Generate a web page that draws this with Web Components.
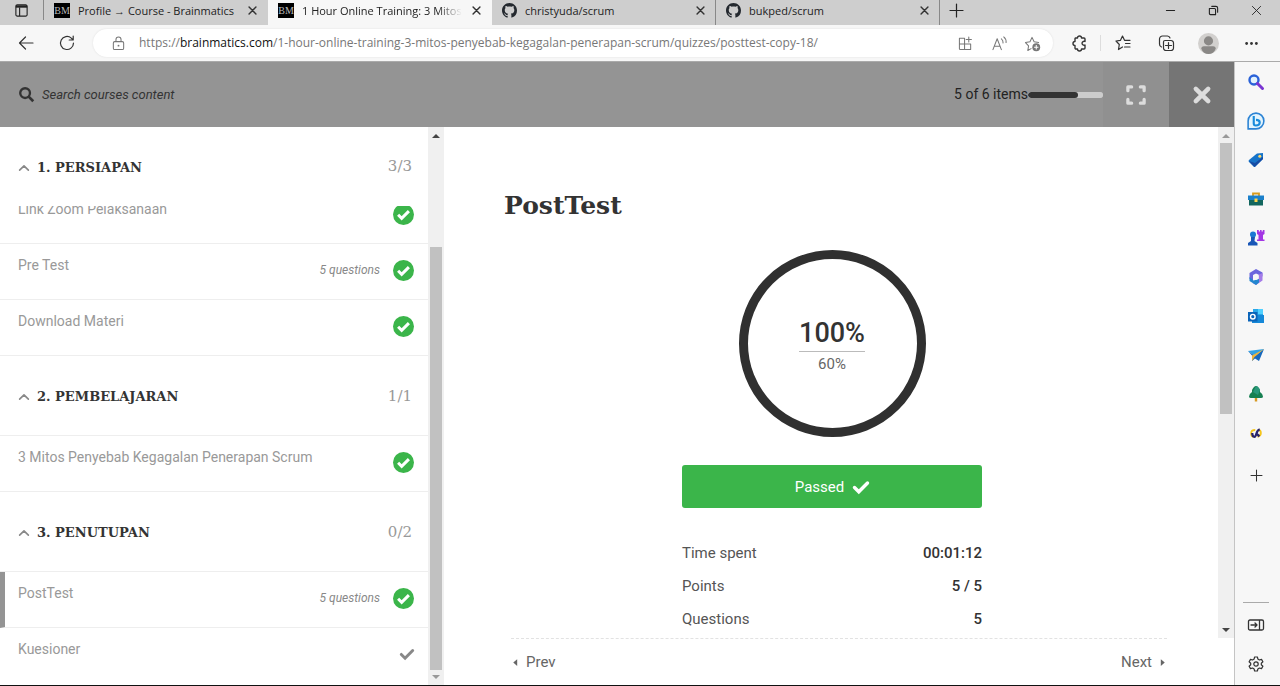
<!DOCTYPE html>
<html lang="id">
<head>
<meta charset="utf-8">
<title>1 Hour Online Training: 3 Mitos Penyebab Kegagalan Penerapan Scrum</title>
<style>
html,body{margin:0;height:100%}
body{font-family:Roboto,"Liberation Sans",sans-serif;color:#333;background:#fff}
</style>
</head>
<body>
<browser-window></browser-window>
<script>
const base = '*{box-sizing:border-box}button{font:inherit;color:inherit;background:none;border:0;padding:0;margin:0;display:flex;align-items:center;justify-content:center}a{color:inherit;text-decoration:none}';
const define = (name, css, html, setup) => {
  const t = document.createElement('template');
  t.innerHTML = `<style>${base}${css}</style>${html}`;
  customElements.define(name, class extends HTMLElement {
    constructor() {
      super();
      this.attachShadow({mode: 'open'}).append(t.content.cloneNode(true));
    }
    connectedCallback() { if (setup) setup(this, this.shadowRoot); }
  });
};

const ln = (d, w = 1.2) => `<path d="${d}" fill="none" stroke="currentColor" stroke-width="${w}" stroke-linecap="round" stroke-linejoin="round"/>`;
const github = '<path fill="#24292f" d="M8 0C3.58 0 0 3.58 0 8c0 3.54 2.29 6.53 5.47 7.59.4.07.55-.17.55-.38 0-.19-.01-.82-.01-1.49-2.01.37-2.53-.49-2.69-.94-.09-.23-.48-.94-.82-1.13-.28-.15-.68-.52-.01-.53.63-.01 1.08.58 1.23.82.72 1.21 1.87.87 2.33.66.07-.52.28-.87.51-1.07-1.78-.2-3.64-.89-3.64-3.95 0-.87.31-1.59.82-2.15-.08-.2-.36-1.02.08-2.12 0 0 .67-.21 2.2.82.64-.18 1.32-.27 2-.27s1.36.09 2 .27c1.53-1.04 2.2-.82 2.2-.82.44 1.1.16 1.92.08 2.12.51.56.82 1.27.82 2.15 0 3.07-1.87 3.75-3.65 3.95.29.25.54.73.54 1.48 0 1.07-.01 1.93-.01 2.2 0 .21.15.46.55.38A8.01 8.01 0 0 0 16 8c0-4.42-3.58-8-8-8z"/>';
const icons = {
  github,
  tabs: ln('M3.5 2h9a1.5 1.5 0 0 1 1.5 1.5v9a1.5 1.5 0 0 1-1.5 1.5h-9A1.5 1.5 0 0 1 2 12.500v-9A1.500 1.500 0 0 1 3.500 2zM6 5v9') + '<path fill="currentColor" d="M2 2.500h12V5H2z"/>',
  x: ln('M3 3l10 10M13 3L3 13', 2.1),
  xthin: ln('M2 2l12 12M14 2L2 14', 1.3),
  plus: ln('M8 0v16M0 8h16', 1.5),
  min: ln('M2 8h12', 1.5),
  restore: ln('M2 5h7.500a1.500 1.500 0 0 1 1.500 1.500V14H3.500A1.500 1.500 0 0 1 2 12.500zM5.500 2h6A2.500 2.500 0 0 1 14 4.500v6', 1.6),
  back: ln('M15 8H1.500M7.500 2L1.500 8l6 6'),
  reload: ln('M14.500 8a6.500 6.500 0 1 1-2.200-4.900L14 4.800M14.200 1v4h-4'),
  lock: ln('M4 6h8a1.500 1.500 0 0 1 1.500 1.500V13A1.500 1.500 0 0 1 12 14.500H4A1.500 1.500 0 0 1 2.500 13V7.500A1.500 1.500 0 0 1 4 6zM5.300 6V3.800a2.700 2.700 0 0 1 5.400 0V6', 1.1) + '<circle cx="8" cy="10.300" r="1" fill="currentColor"/>',
  apps: ln('M1.500 2.500H7v12M1.500 2.500v11a1 1 0 0 0 1 1H13.500V8.500H1.500M11.500 1v5.500M8.700 3.700h5.600', 1.1),
  read: ln('M1 14.500L5.500 3 10 14.500M2.500 11h6M10 3q2 1.500 1.800 4.500M12.500 1q3 2.500 2.500 6', 1.1),
  favadd: ln('M6.500 13.500L3 15.500l.8-5L0.500 7l4.800-.8L7.500 1.500l2.200 4.700 4.800.8', 1.1) + '<circle cx="12" cy="12" r="4.200" fill="currentColor"/><path d="M12 9.700v4.600M9.700 12h4.600" stroke="#fff" stroke-width="1.100"/>',
  puzzle: ln('M4.500 3h2a2 2 0 0 1 4 0H13a1 1 0 0 1 1 1v2.500a2 2 0 1 0 0 3.500v3a1 1 0 0 1-1 1h-2.500a2 2 0 0 1-4 0H5a1 1 0 0 1-1-1v-2.500a2 2 0 1 1 0-4V4q0-1 .5-1z', 1.400),
  fav: ln('M7.500 12l-4 2.500.8-5L1 6l4.500-.7L7.500 1l2 4.300H15M10.500 8.500H15M9.500 12H15'),
  collect: ln('M7 5.500h6A2.500 2.500 0 0 1 15.500 8v5A2.500 2.500 0 0 1 13 15.500H8A2.500 2.500 0 0 1 5.500 13V7A1.500 1.500 0 0 1 7 5.500zM10.500 7.500v6M7.500 10.500h6M3.500 12A3 3 0 0 1 1.500 9V4a3 3 0 0 1 3-3h5A3 3 0 0 1 12 3'),
  user: '<circle cx="8" cy="8" r="8" fill="#d2d0ce"/><circle cx="8" cy="6" r="3.500" fill="#8a8886"/><path fill="#8a8886" d="M2.500 12q0-2 2-2h7q2 0 2 2Q12 16 8 16t-5.500-4z"/>',
  dots: '<g fill="currentColor"><circle cx="2" cy="8" r="1.700"/><circle cx="8" cy="8" r="1.700"/><circle cx="14" cy="8" r="1.700"/></g>',
  search: '<circle cx="6.500" cy="6.500" r="5.200" fill="none" stroke="currentColor" stroke-width="2.500"/><path d="M10.300 10.300l4.900 4.900" stroke="currentColor" stroke-width="2.900"/>',
  full: ln('M1.500 4.500v-3h3M11.500 1.500h3v3M14.500 11.500v3h-3M4.500 14.500h-3v-3', 2.600),
  close: ln('M2.500 2.500l11 11M13.500 2.500l-11 11', 4),
  up: ln('M1 11.500L8 4.500l7 7', 2.600),
  check: '<path d="M1.500 8.500l4.300 4.300L14.500 4" fill="none" stroke="currentColor" stroke-width="3.400" stroke-linecap="round"/>',
  done: '<circle cx="8" cy="8" r="8" fill="#3bb54a"/><path d="M3.900 8.200l2.700 2.700L12.100 5.400" fill="none" stroke="#fff" stroke-width="2.300"/>',
  left: '<path fill="currentColor" d="M11 2v12L4 8z"/>',
  right: '<path fill="currentColor" d="M5 2v12l7-6z"/>',
  sSearch: '<circle cx="6" cy="6" r="4.500" fill="#e2f2fc" stroke="#2a62d8" stroke-width="2.400"/><path d="M9.500 9.500l5 5" stroke="#7a35d2" stroke-width="3" stroke-linecap="round"/>',
  sBing: '<path d="M1 15V8a7 7 0 1 1 7 7z" fill="#e3f4fd" stroke="#2b83d4" stroke-width="1.400"/><path d="M6 3.500v6.800q0 1.700 1.800 1.700c2 0 3.500-1 3.500-2.600S9.500 7 8 7" fill="none" stroke="#188bdc" stroke-width="1.900"/>',
  sTag: '<path d="M9 1.500l6-.5v6l-7.500 7.500q-1 1-2 0l-4.500-4.500q-1-1 0-2z" fill="#1673c9"/><path d="M1 9l5.500 6L15 7v-2L7 11z" fill="#174ba3"/><circle cx="11.800" cy="4.300" r="1.500" fill="#ffd86a"/>',
  sTool: '<path d="M5 5V2.500h6V5" fill="none" stroke="#d99b1c" stroke-width="1.800"/><path d="M0 4.500h16V9H0z" fill="#1b80cb"/><path d="M1 9h14v5.500H1z" fill="#12665e"/><path d="M6.500 7.500h3V11h-3z" fill="#ffd44d"/>',
  sGame: '<circle cx="5" cy="4.500" r="3" fill="#1b78d4"/><path d="M3 7h4l-.5 4 3 2v2.500H0V13l3-2z" fill="#1956b6"/><path d="M9 0h1.800v1.500h1.200V0h1.600v1.500h1.200V0H16.500v4l-1.500 1v4.500h1.500V11H9V9.500h1.500V5L9 4z" fill="#a336e4"/>',
  sOffice: '<path d="M8 0l6.500 3.500v4L8 4.500 5 6v6l-3.500-2V4z" fill="#6b65dd"/><path d="M14.500 4v7.500L8 16l-3.500-2 6-3.500V5.700z" fill="#a47be8"/><path d="M1.500 8v4L8 16l3-2.500V10L5.500 11.500z" fill="#2386cf"/><path d="M8 5l2.700 1.500v3L8 11 5.300 9.500v-3z" fill="#f7f7f7"/>',
  sOutlook: '<path d="M5 1h10v6H5z" fill="#28a8ea"/><path d="M10 1h5v5h-5z" fill="#50d0ff"/><path d="M4 7h12v8H4z" fill="#1588d8"/><path d="M0 4h9.500v9.500H0z" fill="#0a64b9"/><circle cx="4.800" cy="8.700" r="2.300" fill="none" stroke="#fff" stroke-width="1.400"/>',
  sSend: '<path d="M0 4l16-2-9 7z" fill="#30a2e4"/><path d="M0 4l7 5 9-7-5 12-4-2.500L4 14V8.500z" fill="#1768bd"/><path d="M4 8.500L16 2 6.500 10 4 14z" fill="#efb43b"/>',
  sTree: '<path d="M6.800 11h2.400v4.500H6.800z" fill="#d79a24"/><path d="M8 0q2 0 4 4v2q3 2 3 4.500Q15 12 13 12H3q-2 0-2-1.500Q1 8 4 6V4q2-4 4-4z" fill="#178052"/><path d="M8 0q2 0 4 4l-2 5-5-3z" fill="#29977a"/>',
  sLoop: '<path d="M7 4Q1.500 4 1.500 8.500 1.500 13 5 13" fill="none" stroke="#f5c51b" stroke-width="2.400"/><path d="M11 4q3.500 0 3.500 4T10 13" fill="none" stroke="#f5c51b" stroke-width="2.400"/><path d="M3 8q0 5 3 5C9 13 8 3.500 13 3.500M9 9l3.500 3.500" fill="none" stroke="#28236c" stroke-width="3"/>',
  panel: ln('M2 3h12q1.500 0 1.500 1.500v7Q15.500 13 14 13H2Q.5 13 .5 11.500v-7Q.5 3 2 3zM11.500 3v10M3 8h6M7 6l2 2-2 2', 1.3),
  gear: ln('M6.600 1h2.800l.5 2.100 1.500.9 2.100-.6 1.400 2.400L13.300 7.300v1.400l1.600 1.500-1.400 2.400-2.100-.6-1.500.9-.5 2.100H6.600l-.5-2.100-1.500-.9-2.100.6-1.400-2.400 1.600-1.500V7.300L1.100 5.800l1.400-2.400 2.100.6 1.500-.9z') + '<circle cx="8" cy="8" r="2.200" fill="none" stroke="currentColor" stroke-width="1.200"/>'
};

define('ui-icon', ':host{display:block;flex:none;width:var(--s,16px);height:var(--s,16px)}svg{display:block;width:100%;height:100%;overflow:visible}', '<svg viewBox="0 0 16 16" aria-hidden="true"></svg>',
  (el, r) => { r.querySelector('svg').innerHTML = icons[el.getAttribute('name')] || ''; });

define('brand-mark', ':host{display:flex;flex:none;width:16px;height:15px;background:#000;color:#bbb;align-items:center;justify-content:center;font:10px/15px "Liberation Serif",serif}', '<span>BM</span>');

define('browser-tab', `
:host{display:flex;flex:0 1 224px;min-width:0;height:25px;align-items:center;gap:8px;padding:0 9px 4px 10px;border-right:1px solid var(--edge,transparent)}
:host([active]){background:#f7f7f7}
.t{flex:1;min-width:0;white-space:nowrap;overflow:hidden;font-size:11px;line-height:20px;color:#222}
:host([active]) .t{-webkit-mask-image:linear-gradient(90deg,#000 85%,transparent)}
button{width:12px;height:20px;--s:11px;color:#333}`,
'<slot name="icon"></slot><span class="t"><slot></slot></span><button aria-label="Close tab"><ui-icon name="x"></ui-icon></button>');

define('tab-strip', `
:host{display:flex;height:25px;background:#cecece;font-family:"Open Sans","Noto Sans",sans-serif;color:#222}
.menu{width:44px;height:20px;--s:15px;border-right:1px solid #888}
.new{width:32px;height:20px;--s:13px}
.win{margin-left:auto;padding-right:2px;display:flex;--s:11px}
.win button{width:43px;height:20px}
ui-icon[name=github]{--s:15px}`,
`<button class="menu" aria-label="Tab actions"><ui-icon name="tabs"></ui-icon></button>
<browser-tab><brand-mark slot="icon"></brand-mark>Profile → Course - Brainmatics</browser-tab>
<browser-tab active><brand-mark slot="icon"></brand-mark>1 Hour Online Training: 3 Mitos Penyebab</browser-tab>
<browser-tab style="--edge:#888"><ui-icon name="github" slot="icon"></ui-icon>christyuda/scrum</browser-tab>
<browser-tab style="--edge:#888"><ui-icon name="github" slot="icon"></ui-icon>bukped/scrum</browser-tab>
<button class="new" aria-label="New tab"><ui-icon name="plus"></ui-icon></button>
<div class="win"><button aria-label="Minimize"><ui-icon name="min"></ui-icon></button><button aria-label="Restore"><ui-icon name="restore"></ui-icon></button><button aria-label="Close"><ui-icon name="xthin"></ui-icon></button></div>`);

define('address-bar', `
:host{display:flex;height:37px;align-items:center;background:#f7f7f7;border-bottom:1px solid #aaa;padding:0 7px 0 5px;font-family:"Open Sans","Noto Sans",sans-serif;color:#333}
.nav{width:41px;height:30px}
.box{flex:1;min-width:0;display:flex;align-items:center;height:28px;background:#fff;border-radius:14px;padding:0 13px 0 18px;margin:0 4px 0 6px;box-shadow:0 0 2px #ddd;color:#777;--s:15px}
.url{flex:1;min-width:0;margin-left:13px;white-space:nowrap;overflow:hidden;font-size:12px;line-height:20px;outline:0}
.url b{font-weight:400;color:#111}
.box button{width:34px;height:28px}.box button.lock{width:15px}
.box button:last-child{width:32px;margin-right:-8px}
.act{width:43px;height:30px}
.sep{width:1px;height:16px;background:#ddd}
.who{--s:21px}`,
`<button class="nav" aria-label="Back"><ui-icon name="back"></ui-icon></button><button class="nav" aria-label="Refresh"><ui-icon name="reload"></ui-icon></button>
<div class="box"><button class="lock" aria-label="Site information"><ui-icon name="lock"></ui-icon></button><div class="url" role="textbox" aria-label="Address" contenteditable="true" spellcheck="false">https://<b>brainmatics.com</b>/1-hour-online-training-3-mitos-penyebab-kegagalan-penerapan-scrum/quizzes/posttest-copy-18/</div><button aria-label="Apps"><ui-icon name="apps"></ui-icon></button><button aria-label="Read aloud"><ui-icon name="read"></ui-icon></button><button aria-label="Add to favorites"><ui-icon name="favadd"></ui-icon></button></div>
<button class="act" aria-label="Extensions"><ui-icon name="puzzle"></ui-icon></button><i class="sep"></i><button class="act" aria-label="Favorites"><ui-icon name="fav"></ui-icon></button><button class="act" aria-label="Collections"><ui-icon name="collect"></ui-icon></button><button class="act who" aria-label="Profile"><ui-icon name="user"></ui-icon></button><button class="act" aria-label="Settings and more"><ui-icon name="dots" style="--s:13px"></ui-icon></button>`);

define('edge-sidebar', `
:host{display:flex;flex-direction:column;flex:none;width:46px;background:#f7f7f7;border-left:1px solid #c4c4c4;color:#333;align-items:center;padding:0 3px 2px 0}
button{width:40px;height:39px;flex:none}
.plus{height:47px;--s:11px}
hr{width:26px;border:0;border-top:1px solid #aaa;margin:auto 0 2px}`,
'<nav></nav><button class="plus" aria-label="Customize"><ui-icon name="plus"></ui-icon></button><hr><button aria-label="Hide sidebar"><ui-icon name="panel"></ui-icon></button><button aria-label="Settings"><ui-icon name="gear"></ui-icon></button>',
(el, r) => { r.querySelector('nav').innerHTML = ['Search','Bing','Tag','Tool','Game','Office','Outlook','Send','Tree','Loop'].map(n => `<button aria-label="${n}"><ui-icon name="s${n}" style="--s:${n === 'Loop' ? 12 : n === 'Bing' ? 18 : 16}px"></ui-icon></button>`).join(''); });

define('course-header', `
:host{display:flex;flex:none;height:65px;background:#949494;align-items:center}
label{display:flex;align-items:center;gap:8px;flex:1;min-width:0;padding-left:19px;--s:15px}
input{border:0;background:none;outline:0;padding:0;width:300px;font:italic 13px/20px Roboto,sans-serif;color:#333}
input::placeholder{color:#333;opacity:1}
.count{font-size:14px;line-height:20px;color:#222;padding-bottom:2px}
progress{appearance:none;-webkit-appearance:none;width:75px;height:6px;border:0;border-radius:3px;overflow:hidden;background:#ccc}
progress::-webkit-progress-bar{background:#ccc;border-radius:3px}
progress::-webkit-progress-value{background:#333;border-radius:3px}
button{width:66px;height:65px;color:#dcdcdc;background:#909090;--s:20px}
button.close{width:65px;background:#757575;--s:18px}`,
`<label><ui-icon name="search"></ui-icon><input type="search" placeholder="Search courses content" aria-label="Search courses content"></label>
<span class="count" id="c">5 of 6 items</span><progress value="4" max="6" aria-labelledby="c"></progress>
<button aria-label="Full screen"><ui-icon name="full"></ui-icon></button><button class="close" aria-label="Close"><ui-icon name="close"></ui-icon></button>`);

define('scroll-track', `
:host{display:flex;flex-direction:column;flex:none;width:16px;background:#f0f0f0;align-items:center}
i{width:0;height:0;border:4px solid transparent;margin:0}
.u{border-top:0;border-bottom-color:var(--up,#444);margin:7px 0 5px}
.d{border-bottom:0;border-top-color:var(--down,#444);margin:5px 0 6px}
.track{flex:1;width:12px;display:flex;flex-direction:column}
.a{flex:var(--before,0)}.thumb{flex:var(--size,1);background:#c1c1c1}.b{flex:var(--after,0)}`,
'<i class="u"></i><div class="track"><div class="a"></div><div class="thumb"></div><div class="b"></div></div><i class="d"></i>');

define('course-section', `
:host{display:block}
header{display:flex;align-items:center;height:80px;padding:3px 16px 0 19px;gap:8px;background:#fff;border-bottom:1px solid #eee;position:relative;z-index:1}
:host([stuck]) header{height:79px;border-color:#fff}
:host([stuck]) .rows{margin-top:-18px}
h2{flex:1;margin:0;font:bold 13px/20px "DejaVu Serif",serif;color:#333}
button{--s:10px;color:#888}
.n{font:15px/20px "DejaVu Serif",serif;color:#999;padding-bottom:3px}`,
'<header><button aria-label="Collapse section"><ui-icon name="up"></ui-icon></button><h2></h2><span class="n"></span></header><div class="rows"><slot></slot></div>',
(el, r) => { r.querySelector('h2').textContent = el.getAttribute('heading'); r.querySelector('.n').textContent = el.getAttribute('count'); });

define('lesson-row', `
:host{display:block;height:56px;border-bottom:1px solid #eee}
:host([current]){border-left:5px solid #949494}
:host([current]) a{padding-left:13px}
:host([open]){border-bottom:0}
a{display:flex;height:55px;padding:11px 14px 14px 18px;font-size:14px;line-height:20px;color:#999}
.t{flex:1}
.m{align-self:center;font-style:italic;font-size:12px;color:#888;margin-right:13px}
ui-icon{align-self:center;--s:21px}
:host([open]) ui-icon{--s:14px;color:#888}`,
'<a href="#"><span class="t"><slot></slot></span><span class="m"></span><ui-icon></ui-icon></a>',
(el, r) => { r.querySelector('.m').textContent = el.getAttribute('meta') || ''; const i = r.querySelector('ui-icon'); i.setAttribute('name', el.hasAttribute('open') ? 'check' : 'done'); i.connectedCallback(); });

define('curriculum-panel', `
:host{display:flex;flex:none;width:444px;min-height:0}
.list{flex:1;min-width:0;overflow:hidden}
scroll-track{--before:104;--size:421;--after:0;--down:#999}`,
`<div class="list">
<course-section stuck heading="1. PERSIAPAN" count="3/3"><lesson-row>Link Zoom Pelaksanaan</lesson-row><lesson-row meta="5 questions">Pre Test</lesson-row><lesson-row>Download Materi</lesson-row></course-section>
<course-section heading="2. PEMBELAJARAN" count="1/1"><lesson-row>3 Mitos Penyebab Kegagalan Penerapan Scrum</lesson-row></course-section>
<course-section heading="3. PENUTUPAN" count="0/2"><lesson-row current meta="5 questions">PostTest</lesson-row><lesson-row open>Kuesioner</lesson-row></course-section>
</div><scroll-track></scroll-track>`);

define('score-ring', `
:host{display:flex;flex-direction:column;align-items:center;justify-content:center;width:187px;height:187px;padding-top:4px;border:9px solid #303030;border-radius:50%;box-sizing:border-box}
b{font-weight:500;font-size:27px;line-height:36px;border-bottom:1px solid #bbb;color:#333}
span{font-size:15px;line-height:24px;color:#666}`,
'<b><slot></slot></b><span><slot name="pass"></slot></span>');

define('quiz-result', `
:host{display:flex;flex-direction:column;flex:1;min-width:0;min-height:0}
.scroll{flex:1;min-height:0;display:flex}
main{flex:1;min-width:0;overflow:hidden;padding:59px 58px 0 60px;display:flex;flex-direction:column}
h1{margin:0;font:bold 25px/40px "DejaVu Serif",serif;color:#333}
.card{width:300px;align-self:center;display:flex;flex-direction:column;align-items:center;padding-top:24px}
.pass{margin:28px 0 29px;width:100%;height:43px;background:#3bb54a;color:#fff;border-radius:3px;font-size:15px;gap:9px;--s:16px;flex:none}
table{width:100%;border-collapse:collapse;font-size:15px;line-height:33px}
th{font-weight:400;text-align:left;padding:0;color:#555}td{font-weight:500;text-align:right;padding:0;color:#333}
footer{flex:none;height:47px;margin:0 67px;display:flex;justify-content:space-between;align-items:center;border-top:1px dashed #e2e2e2;font-size:15px;line-height:20px;color:#666;--s:9px}
footer a{display:flex;align-items:center;gap:6px}
scroll-track{--before:0;--size:271;--after:209;--up:#999}`,
`<div class="scroll"><main><h1>PostTest</h1><div class="card"><score-ring>100%<span slot="pass">60%</span></score-ring>
<button class="pass">Passed<ui-icon name="check"></ui-icon></button>
<table><tr><th scope="row">Time spent</th><td>00:01:12</td></tr><tr><th scope="row">Points</th><td>5 / 5</td></tr><tr><th scope="row">Questions</th><td>5</td></tr></table></div></main><scroll-track></scroll-track></div>
<footer><a href="#"><ui-icon name="left"></ui-icon>Prev</a><a href="#">Next<ui-icon name="right"></ui-icon></a></footer>`);

define('browser-window', `
:host{display:flex;flex-direction:column;height:100vh;border-bottom:1px solid #111;box-sizing:border-box;overflow:hidden}
.body{flex:1;display:flex;min-height:0}
.page{flex:1;min-width:0;display:flex;flex-direction:column}
.course{flex:1;display:flex;min-height:0}`,
'<tab-strip></tab-strip><address-bar></address-bar><div class="body"><div class="page"><course-header></course-header><div class="course"><curriculum-panel></curriculum-panel><quiz-result></quiz-result></div></div><edge-sidebar></edge-sidebar></div>');
</script>
</body>
</html>
